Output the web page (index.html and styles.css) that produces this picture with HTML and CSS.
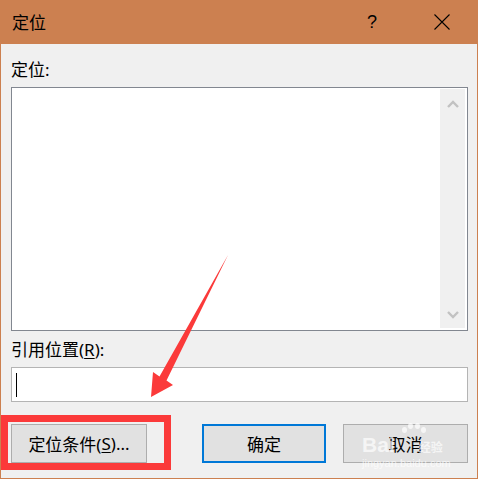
FILE: index.html
```html
<!DOCTYPE html>
<html lang="zh">
<head>
<meta charset="utf-8">
<link rel="stylesheet" href="styles.css">
</head>
<body>
<div class="window">
  <div class="titlebar">
    <span class="title">定位</span>
    <span class="tb-btn help">?</span>
    <span class="tb-btn close">
      <svg width="16" height="16" viewBox="0 0 16 16"><path d="M0.5 0.5 L15.5 15.5 M15.5 0.5 L0.5 15.5" stroke="#000" stroke-width="1.1" fill="none"/></svg>
    </span>
  </div>
  <div class="body">
    <div class="label first">定位:</div>
    <div class="listbox">
      <div class="scrollbar">
        <svg class="chev" width="12" height="8" viewBox="0 0 12 8"><path d="M1 7 L6 2 L11 7" stroke="#c2c2c2" stroke-width="2.4" fill="none"/></svg>
        <svg class="chev" width="12" height="8" viewBox="0 0 12 8"><path d="M1 1 L6 6 L11 1" stroke="#c2c2c2" stroke-width="2.4" fill="none"/></svg>
      </div>
    </div>
    <div class="label second">引用位置(<u>R</u>):</div>
    <div class="input"><span class="caret"></span></div>
    <div class="buttons">
      <div class="btn special">定位条件(<u>S</u>)...</div>
      <div class="btn ok">确定</div>
      <div class="btn cancel">取消</div>
    </div>
  </div>
</div>
<div class="highlight"></div>
<svg class="arrow" width="478" height="479" viewBox="0 0 478 479">
  <polygon points="228,255 166.5,380.4 173,385 151,397 153,372 159.5,376.6" fill="#fb3a3a"/>
</svg>
<div class="watermark">
  <div class="paw"><i></i><i></i><i></i><i></i></div>
  <div class="wm-top"><b>Bai</b><span>经验</span></div>
  <div class="wm-url">jingyan.baidu.com</div>
</div>
</body>
</html>
```
FILE: styles.css
```css
html, body {
  margin: 0;
  padding: 0;
}
body {
  width: 478px;
  height: 479px;
  overflow: hidden;
  position: relative;
  font-family: "Noto Sans", "Noto Sans CJK SC", sans-serif;
  color: #000;
  background: #f0f0f0;
}
.window {
  width: 478px;
  height: 479px;
  box-sizing: border-box;
  display: flex;
  flex-direction: column;
  background: #f0f0f0;
  border: 1px solid #cc8050;
  border-top: none;
}
.titlebar {
  height: 44px;
  margin: 0 -1px;
  background: #cc8050;
  display: flex;
  align-items: center;
  padding: 0 13px 0 12px;
  font-family: "Noto Sans CJK SC", sans-serif;
}
.title {
  font-size: 17px;
  line-height: 20px;
  flex: 1;
}
.tb-btn {
  width: 46px;
  display: flex;
  justify-content: center;
  align-items: center;
}
.help {
  font-family: "Liberation Sans", sans-serif;
  font-size: 18px;
  line-height: 20px;
  margin-right: 24px;
}
.close svg {
  display: block;
}
.body {
  display: flex;
  flex-direction: column;
  padding: 0 9px 0 10px;
}
.label {
  font-family: "Noto Sans", "Noto Sans CJK SC", sans-serif;
  font-size: 17px;
  line-height: 20px;
  height: 20px;
}
.label.first {
  margin-top: 16px;
}
.label.second {
  margin-top: 9px;
}
.label u, .btn u {
  text-underline-offset: 2px;
}
.listbox {
  margin-top: 7px;
  height: 244px;
  box-sizing: border-box;
  border: 1px solid #828790;
  background: #fff;
  display: flex;
  justify-content: flex-end;
  padding: 1px 2px 2px 0;
}
.scrollbar {
  width: 25px;
  background: #f0f0f0;
  display: flex;
  flex-direction: column;
  justify-content: space-between;
  align-items: center;
  padding: 11px 0 9px;
  box-sizing: border-box;
}
.chev {
  display: block;
}
.input {
  margin-top: 7px;
  height: 35px;
  box-sizing: border-box;
  border: 1px solid #b4b4b4;
  background: #fff;
  display: flex;
  align-items: center;
  padding-left: 4px;
}
.caret {
  width: 1px;
  height: 24px;
  background: #000;
}
.buttons {
  margin-top: 22px;
  display: flex;
}
.btn {
  height: 39px;
  box-sizing: border-box;
  background: #e1e1e1;
  border: 1px solid #adadad;
  display: flex;
  align-items: center;
  justify-content: center;
  font-size: 17px;
  font-family: "Noto Sans", "Noto Sans CJK SC", sans-serif;
}
.btn.special {
  width: 136px;
}
.btn.ok {
  width: 124px;
  margin-left: 55px;
  border: 2px solid #0078d7;
}
.btn.cancel {
  width: 125px;
  margin-left: 17px;
}
.highlight {
  position: absolute;
  left: 1px;
  top: 415px;
  width: 170px;
  height: 55px;
  box-sizing: border-box;
  border: 7px solid #fb3a3a;
}
.arrow {
  position: absolute;
  left: 0;
  top: 0;
  pointer-events: none;
}
.watermark {
  position: absolute;
  left: 362px;
  top: 423px;
  width: 100px;
  white-space: nowrap;
  color: rgba(255, 255, 255, 0.7);
  font-family: "Liberation Sans", "Noto Sans CJK SC", sans-serif;
  pointer-events: none;
}
.paw {
  position: relative;
  height: 12px;
}
.paw i {
  position: absolute;
  width: 5px;
  height: 6px;
  border-radius: 50%;
  background: rgba(255, 255, 255, 0.7);
}
.paw i:nth-child(1) { left: 40px; top: 4px; }
.paw i:nth-child(2) { left: 46px; top: 0; }
.paw i:nth-child(3) { left: 53px; top: 0; }
.paw i:nth-child(4) { left: 59px; top: 4px; }
.wm-top {
  display: flex;
  align-items: baseline;
  line-height: 20px;
  height: 20px;
}
.wm-top b {
  font-size: 21px;
}
.wm-top span {
  font-size: 12px;
  font-weight: bold;
  margin-left: 24px;
}
.wm-url {
  font-size: 11px;
  line-height: 13px;
  margin-top: 2px;
}
```
